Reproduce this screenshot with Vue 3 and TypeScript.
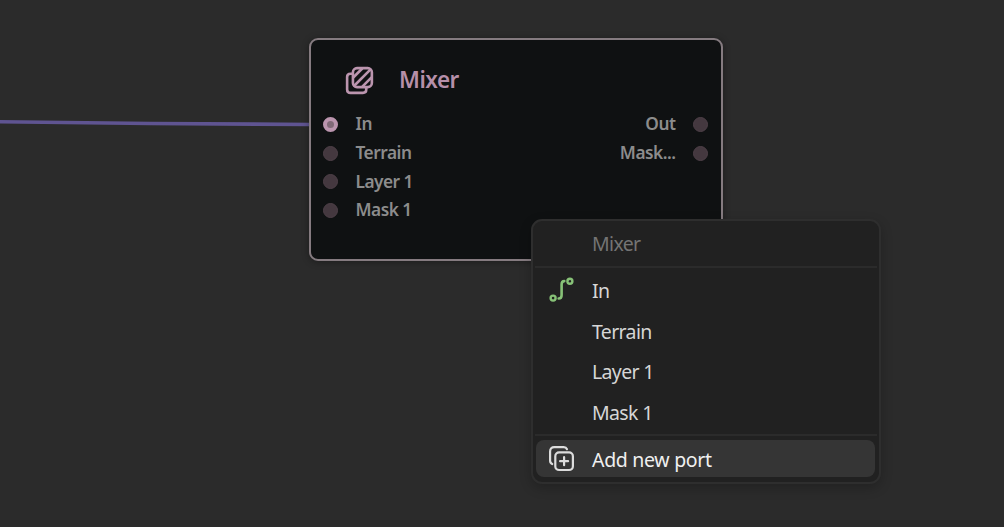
<script setup lang="ts">
interface Port { label: string; connected?: boolean }

const inputs: Port[] = [
  { label: 'In', connected: true },
  { label: 'Terrain' },
  { label: 'Layer 1' },
  { label: 'Mask 1' },
]
const outputs: Port[] = [{ label: 'Out' }, { label: 'Mask...' }]
const menuPorts = inputs.map((p) => p.label)
</script>

<template>
  <main class="canvas">
    <svg class="wire" width="312" height="140" viewBox="0 0 312 140">
      <path d="M-2 121.8C90 122.8 220 124.4 310 124.5" fill="none" stroke="#5f5491" stroke-width="3.6" />
    </svg>

    <section class="node">
      <header class="node-head">
        <svg class="node-icon" width="29" height="29" viewBox="0 0 30 30" fill="none" stroke="#bb95ae" stroke-width="2.7" stroke-linecap="round" stroke-linejoin="round">
          <rect x="8.2" y="2.2" width="19.6" height="19.6" rx="4.2" />
          <path d="M7.5 8H5.6C3.6 8 2.2 9.4 2.2 11.4V24.2C2.2 26.4 3.6 27.8 5.8 27.8H18.6C20.6 27.8 22 26.4 22 24.4V22.6" />
          <path d="M8.8 11.6L17.6 2.8M9.8 20.2L26.2 3.8M18.2 21L27.2 12" />
        </svg>
        <h1 class="node-title">Mixer</h1>
      </header>
      <div class="ports">
        <ul class="inputs">
          <li v-for="p in inputs" :key="p.label" class="port">
            <span class="dot" :class="{ on: p.connected }"></span>
            <span class="port-label">{{ p.label }}</span>
          </li>
        </ul>
        <ul class="outputs">
          <li v-for="p in outputs" :key="p.label" class="port">
            <span class="port-label">{{ p.label }}</span>
            <span class="dot"></span>
          </li>
        </ul>
      </div>
    </section>

    <nav class="menu">
      <div class="menu-title">Mixer</div>
      <div class="rule"></div>
      <div class="menu-list">
        <div v-for="(label, i) in menuPorts" :key="label" class="item">
          <span class="item-icon">
            <svg v-if="i === 0" width="26" height="26" viewBox="0 0.8 26 26" fill="none" stroke="#87c177" stroke-width="2.4" stroke-linecap="round">
              <circle cx="4.1" cy="20.9" r="2.5" />
              <circle cx="20.9" cy="4.1" r="2.5" />
              <path d="M9.7 21.3C11.7 21.3 12.6 20.4 12.6 18V7.3C12.6 4.8 13.4 3.9 15.3 3.9" stroke-width="2.6" />
            </svg>
          </span>
          <span>{{ label }}</span>
        </div>
      </div>
      <div class="rule"></div>
      <button class="item add">
        <span class="item-icon">
          <svg width="26" height="26" viewBox="-0.9 0 26 26" fill="none" stroke="#dcdcdc" stroke-width="2.2" stroke-linecap="round">
            <rect x="6.4" y="6.4" width="17.6" height="17.6" rx="3.8" />
            <path d="M3.3 18C1.8 17.4 1.2 16.4 1.2 14.8V5.4C1.2 2.7 2.7 1.2 5.4 1.2H14.8C16.4 1.2 17.5 1.8 18.1 3.2" />
            <path d="M15.2 11.2V19.2M11.2 15.2H19.2" />
          </svg>
        </span>
        <span class="add-label">Add new port</span>
      </button>
    </nav>
  </main>
</template>

<style>
html,
body {
  margin: 0;
  background: #2b2b2b;
  overflow: hidden;
}
</style>

<style scoped>
.canvas {
  position: relative;
  width: 1004px;
  height: 527px;
  overflow: hidden;
  background: #2b2b2b;
  font-family: 'Noto Sans', 'Open Sans', sans-serif;
}
.wire {
  position: absolute;
  left: 0;
  top: 0;
}
.node {
  position: absolute;
  left: 309px;
  top: 38px;
  width: 413.5px;
  height: 223px;
  box-sizing: border-box;
  border: 2px solid #857b80;
  border-radius: 9px;
  background: #0f1112;
  box-shadow: 0 1px 7px rgba(0, 0, 0, 0.35);
}
.node-head {
  display: flex;
  align-items: center;
  height: 30px;
  padding: 26px 0 0 33.5px;
}
.node-icon {
  margin-top: -1px;
}
.node-title {
  margin: -2px 0 0 25.5px;
  font-size: 22.5px;
  line-height: 30px;
  font-weight: 560;
  letter-spacing: -0.5px;
  color: #b68fa9;
}
.ports {
  display: flex;
  justify-content: space-between;
  padding: 14px 12.5px 0 11.5px;
}
.inputs,
.outputs {
  margin: 0;
  padding: 0;
  list-style: none;
}
.port {
  display: flex;
  align-items: center;
  height: 28.8px;
}
.outputs .port {
  justify-content: flex-end;
}
.port-label {
  margin-top: -0.5px;
  font-size: 17.3px;
  line-height: 24px;
  font-weight: 560;
  letter-spacing: -0.5px;
  color: #8c8c8c;
}
.inputs .port-label {
  margin-left: 18px;
}
.inputs .port:last-child .port-label {
  margin-top: -2px;
}
.outputs .port-label {
  margin-right: 17.5px;
}
.dot {
  width: 15px;
  height: 15px;
  box-sizing: border-box;
  border: 1.5px solid #4e4048;
  border-radius: 50%;
  background: #44383f;
}
.dot.on {
  border: 4px solid #bb95ae;
  background: #806977;
}
.menu {
  position: absolute;
  left: 531px;
  top: 219px;
  width: 350px;
  height: 265px;
  box-sizing: border-box;
  border: 2px solid #2e2e2e;
  border-radius: 11px;
  background: #212121;
  box-shadow: 0 4px 12px rgba(0, 0, 0, 0.22);
  font-size: 19.5px;
  letter-spacing: -0.65px;
  color: #d6d6d6;
}
.menu-title {
  height: 45px;
  padding-left: 59px;
  line-height: 46px;
  color: #747474;
}
.rule {
  height: 2px;
  margin: 0 2px;
  background: #2b2b2b;
}
.menu-list {
  padding: 2.4px 0 1.6px 3.5px;
}
.item {
  display: flex;
  align-items: center;
  height: 40.5px;
}
.item-icon {
  width: 26px;
  height: 26px;
  margin: 0 17.5px 0 12px;
}
.item-icon svg {
  display: block;
  overflow: visible;
}
.add {
  width: 339px;
  height: 37.5px;
  margin: 4px 0 0 3px;
  padding: 0;
  border: 0;
  border-radius: 8px;
  background: #353535;
  font: inherit;
  letter-spacing: -0.3px;
  color: #f0f0f0;
}
.add-label {
  margin: 2px 0 0 0.5px;
}
</style>
